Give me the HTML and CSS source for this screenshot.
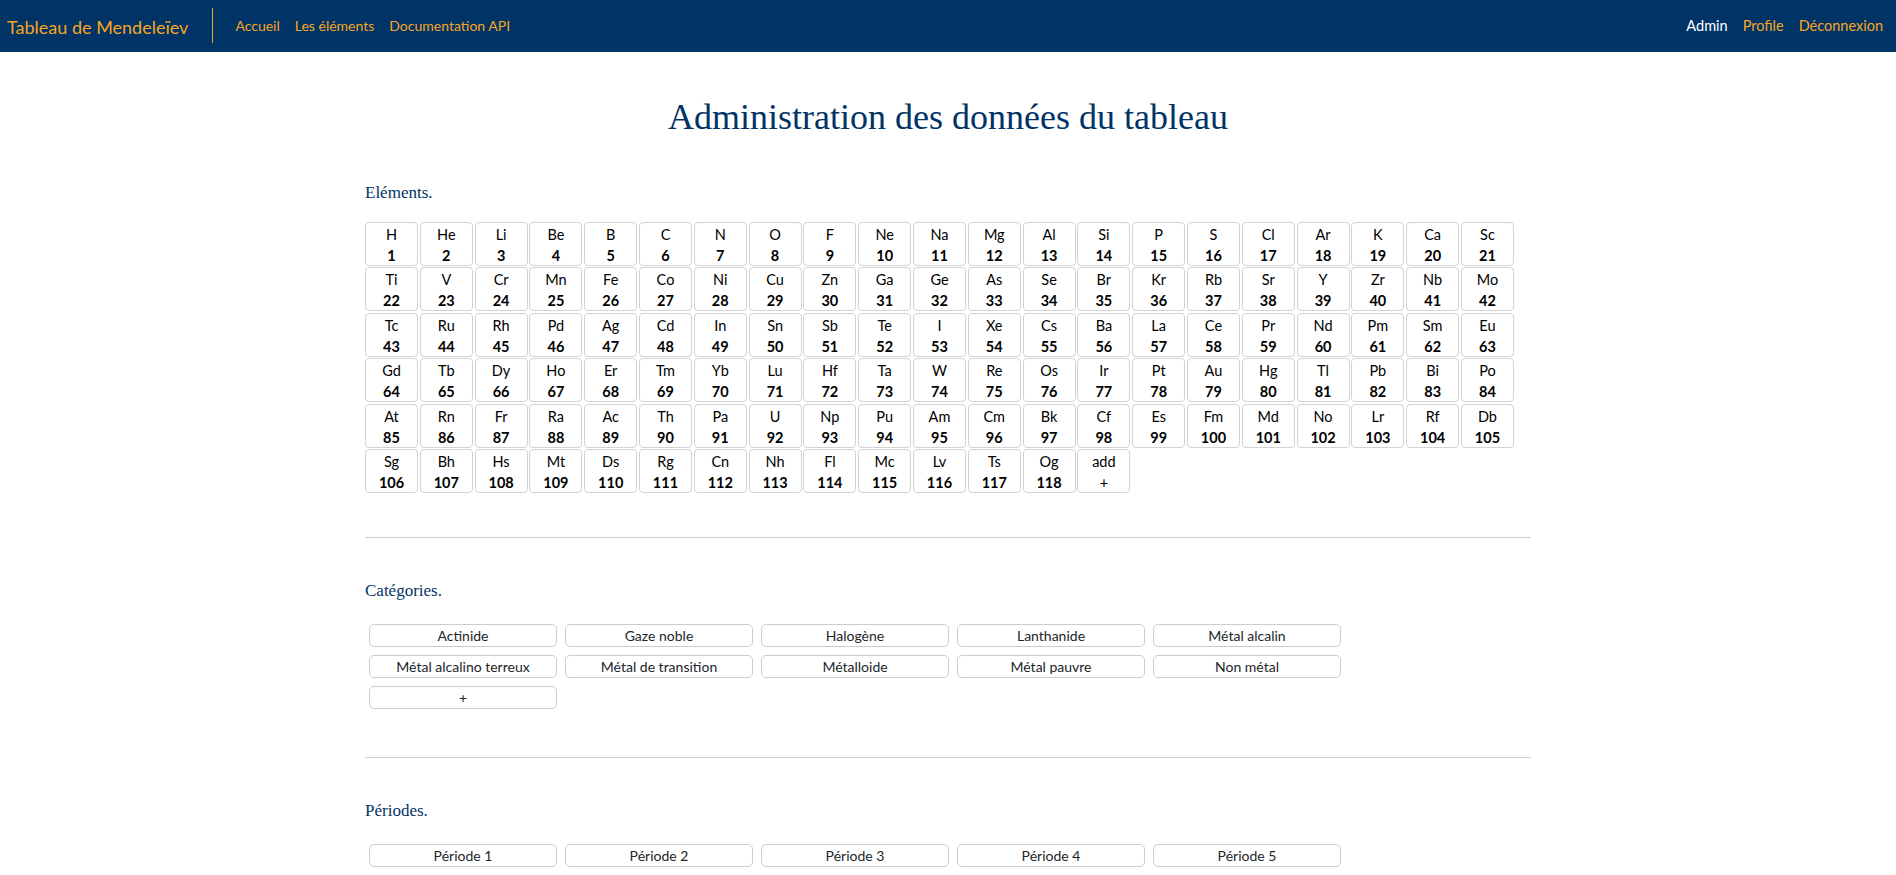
FILE: index.html
```html
<!DOCTYPE html>
<html lang="fr">
<head>
<meta charset="utf-8">
<title>Administration des données du tableau</title>
<link rel="stylesheet" href="styles.css">
</head>
<body>
<nav class="navbar">
  <a class="brand" href="#">Tableau de Mendeleïev</a>
  <span class="sep"></span>
  <ul class="nav-links">
    <li><a href="#">Accueil</a></li>
    <li><a href="#">Les éléments</a></li>
    <li><a href="#">Documentation API</a></li>
  </ul>
  <ul class="nav-links nav-right">
    <li><a class="active" href="#">Admin</a></li>
    <li><a href="#">Profile</a></li>
    <li><a href="#">Déconnexion</a></li>
  </ul>
</nav>

<main class="container">
  <h1 class="title">Administration des données du tableau</h1>

  <h2 class="label">Eléments.</h2>
  <div class="elements">
    <div class="cell"><span>H</span><b>1</b></div>
    <div class="cell"><span>He</span><b>2</b></div>
    <div class="cell"><span>Li</span><b>3</b></div>
    <div class="cell"><span>Be</span><b>4</b></div>
    <div class="cell"><span>B</span><b>5</b></div>
    <div class="cell"><span>C</span><b>6</b></div>
    <div class="cell"><span>N</span><b>7</b></div>
    <div class="cell"><span>O</span><b>8</b></div>
    <div class="cell"><span>F</span><b>9</b></div>
    <div class="cell"><span>Ne</span><b>10</b></div>
    <div class="cell"><span>Na</span><b>11</b></div>
    <div class="cell"><span>Mg</span><b>12</b></div>
    <div class="cell"><span>Al</span><b>13</b></div>
    <div class="cell"><span>Si</span><b>14</b></div>
    <div class="cell"><span>P</span><b>15</b></div>
    <div class="cell"><span>S</span><b>16</b></div>
    <div class="cell"><span>Cl</span><b>17</b></div>
    <div class="cell"><span>Ar</span><b>18</b></div>
    <div class="cell"><span>K</span><b>19</b></div>
    <div class="cell"><span>Ca</span><b>20</b></div>
    <div class="cell"><span>Sc</span><b>21</b></div>
    <div class="cell"><span>Ti</span><b>22</b></div>
    <div class="cell"><span>V</span><b>23</b></div>
    <div class="cell"><span>Cr</span><b>24</b></div>
    <div class="cell"><span>Mn</span><b>25</b></div>
    <div class="cell"><span>Fe</span><b>26</b></div>
    <div class="cell"><span>Co</span><b>27</b></div>
    <div class="cell"><span>Ni</span><b>28</b></div>
    <div class="cell"><span>Cu</span><b>29</b></div>
    <div class="cell"><span>Zn</span><b>30</b></div>
    <div class="cell"><span>Ga</span><b>31</b></div>
    <div class="cell"><span>Ge</span><b>32</b></div>
    <div class="cell"><span>As</span><b>33</b></div>
    <div class="cell"><span>Se</span><b>34</b></div>
    <div class="cell"><span>Br</span><b>35</b></div>
    <div class="cell"><span>Kr</span><b>36</b></div>
    <div class="cell"><span>Rb</span><b>37</b></div>
    <div class="cell"><span>Sr</span><b>38</b></div>
    <div class="cell"><span>Y</span><b>39</b></div>
    <div class="cell"><span>Zr</span><b>40</b></div>
    <div class="cell"><span>Nb</span><b>41</b></div>
    <div class="cell"><span>Mo</span><b>42</b></div>
    <div class="cell"><span>Tc</span><b>43</b></div>
    <div class="cell"><span>Ru</span><b>44</b></div>
    <div class="cell"><span>Rh</span><b>45</b></div>
    <div class="cell"><span>Pd</span><b>46</b></div>
    <div class="cell"><span>Ag</span><b>47</b></div>
    <div class="cell"><span>Cd</span><b>48</b></div>
    <div class="cell"><span>In</span><b>49</b></div>
    <div class="cell"><span>Sn</span><b>50</b></div>
    <div class="cell"><span>Sb</span><b>51</b></div>
    <div class="cell"><span>Te</span><b>52</b></div>
    <div class="cell"><span>I</span><b>53</b></div>
    <div class="cell"><span>Xe</span><b>54</b></div>
    <div class="cell"><span>Cs</span><b>55</b></div>
    <div class="cell"><span>Ba</span><b>56</b></div>
    <div class="cell"><span>La</span><b>57</b></div>
    <div class="cell"><span>Ce</span><b>58</b></div>
    <div class="cell"><span>Pr</span><b>59</b></div>
    <div class="cell"><span>Nd</span><b>60</b></div>
    <div class="cell"><span>Pm</span><b>61</b></div>
    <div class="cell"><span>Sm</span><b>62</b></div>
    <div class="cell"><span>Eu</span><b>63</b></div>
    <div class="cell"><span>Gd</span><b>64</b></div>
    <div class="cell"><span>Tb</span><b>65</b></div>
    <div class="cell"><span>Dy</span><b>66</b></div>
    <div class="cell"><span>Ho</span><b>67</b></div>
    <div class="cell"><span>Er</span><b>68</b></div>
    <div class="cell"><span>Tm</span><b>69</b></div>
    <div class="cell"><span>Yb</span><b>70</b></div>
    <div class="cell"><span>Lu</span><b>71</b></div>
    <div class="cell"><span>Hf</span><b>72</b></div>
    <div class="cell"><span>Ta</span><b>73</b></div>
    <div class="cell"><span>W</span><b>74</b></div>
    <div class="cell"><span>Re</span><b>75</b></div>
    <div class="cell"><span>Os</span><b>76</b></div>
    <div class="cell"><span>Ir</span><b>77</b></div>
    <div class="cell"><span>Pt</span><b>78</b></div>
    <div class="cell"><span>Au</span><b>79</b></div>
    <div class="cell"><span>Hg</span><b>80</b></div>
    <div class="cell"><span>Tl</span><b>81</b></div>
    <div class="cell"><span>Pb</span><b>82</b></div>
    <div class="cell"><span>Bi</span><b>83</b></div>
    <div class="cell"><span>Po</span><b>84</b></div>
    <div class="cell"><span>At</span><b>85</b></div>
    <div class="cell"><span>Rn</span><b>86</b></div>
    <div class="cell"><span>Fr</span><b>87</b></div>
    <div class="cell"><span>Ra</span><b>88</b></div>
    <div class="cell"><span>Ac</span><b>89</b></div>
    <div class="cell"><span>Th</span><b>90</b></div>
    <div class="cell"><span>Pa</span><b>91</b></div>
    <div class="cell"><span>U</span><b>92</b></div>
    <div class="cell"><span>Np</span><b>93</b></div>
    <div class="cell"><span>Pu</span><b>94</b></div>
    <div class="cell"><span>Am</span><b>95</b></div>
    <div class="cell"><span>Cm</span><b>96</b></div>
    <div class="cell"><span>Bk</span><b>97</b></div>
    <div class="cell"><span>Cf</span><b>98</b></div>
    <div class="cell"><span>Es</span><b>99</b></div>
    <div class="cell"><span>Fm</span><b>100</b></div>
    <div class="cell"><span>Md</span><b>101</b></div>
    <div class="cell"><span>No</span><b>102</b></div>
    <div class="cell"><span>Lr</span><b>103</b></div>
    <div class="cell"><span>Rf</span><b>104</b></div>
    <div class="cell"><span>Db</span><b>105</b></div>
    <div class="cell"><span>Sg</span><b>106</b></div>
    <div class="cell"><span>Bh</span><b>107</b></div>
    <div class="cell"><span>Hs</span><b>108</b></div>
    <div class="cell"><span>Mt</span><b>109</b></div>
    <div class="cell"><span>Ds</span><b>110</b></div>
    <div class="cell"><span>Rg</span><b>111</b></div>
    <div class="cell"><span>Cn</span><b>112</b></div>
    <div class="cell"><span>Nh</span><b>113</b></div>
    <div class="cell"><span>Fl</span><b>114</b></div>
    <div class="cell"><span>Mc</span><b>115</b></div>
    <div class="cell"><span>Lv</span><b>116</b></div>
    <div class="cell"><span>Ts</span><b>117</b></div>
    <div class="cell"><span>Og</span><b>118</b></div>
    <div class="cell"><span>add</span><span>+</span></div>
  </div>

  <hr class="divider">

  <h2 class="label">Catégories.</h2>
  <div class="btn-list">
    <button class="btn">Actinide</button>
    <button class="btn">Gaze noble</button>
    <button class="btn">Halogène</button>
    <button class="btn">Lanthanide</button>
    <button class="btn">Métal alcalin</button>
    <button class="btn">Métal alcalino terreux</button>
    <button class="btn">Métal de transition</button>
    <button class="btn">Métalloide</button>
    <button class="btn">Métal pauvre</button>
    <button class="btn">Non métal</button>
    <button class="btn">+</button>
  </div>

  <hr class="divider">

  <h2 class="label">Périodes.</h2>
  <div class="btn-list">
    <button class="btn">Période 1</button>
    <button class="btn">Période 2</button>
    <button class="btn">Période 3</button>
    <button class="btn">Période 4</button>
    <button class="btn">Période 5</button>
    <button class="btn">Période 6</button>
    <button class="btn">Période 7</button>
    <button class="btn">+</button>
  </div>
</main>
</body>
</html>
```

FILE: styles.css
```css
* { box-sizing: border-box; }

html, body {
  margin: 0;
  padding: 0;
  background: #ffffff;
}

body {
  font-family: Lato, "Noto Sans", sans-serif;
  font-size: 14px;
  color: #212529;
}

/* Navbar */
.navbar {
  height: 52px;
  background: #003366;
  display: flex;
  align-items: center;
  padding: 0 13px 0 7px;
}

.navbar a {
  text-decoration: none;
  color: #f6a623;
}

.brand {
  font-size: 18px;
  line-height: 24px;
  padding-top: 2px;
}

.sep {
  width: 1px;
  height: 35px;
  background: #f6a623;
  margin: 8px 0 0 24px;
  align-self: flex-start;
}

.nav-links {
  list-style: none;
  display: flex;
  gap: 15px;
  margin: 0 0 0 22px;
  padding: 0;
  font-size: 14px;
  line-height: 20px;
}

.nav-right {
  margin-left: auto;
  font-size: 14.5px;
}

.navbar a.active {
  color: #ffffff;
}

/* Main */
.container {
  width: 1166px;
  margin: 0 auto;
}

.title {
  font-family: "Liberation Serif", "Times New Roman", serif;
  font-weight: normal;
  font-size: 36px;
  line-height: 44px;
  color: #003366;
  text-align: center;
  margin: 43px 0 44px;
}

.label {
  font-family: "Liberation Serif", "Times New Roman", serif;
  font-weight: normal;
  font-size: 17px;
  line-height: 20px;
  color: #003366;
  margin: 0 0 19px;
}

.elements {
  display: grid;
  grid-template-columns: repeat(21, 53px);
  column-gap: 1.8px;
  row-gap: 1.4px;
}

.cell {
  height: 44px;
  border: 1px solid #d3d3d3;
  border-radius: 4px;
  background: #fff;
  padding-top: 1px;
  display: flex;
  flex-direction: column;
  align-items: center;
  color: #000;
  font-size: 14.5px;
  line-height: 21px;
}

.cell b {
  font-weight: 700;
}

.divider {
  border: 0;
  border-top: 1px solid #cfcfcf;
  margin: 44px 0 43px;
  height: 0;
}

.btn-list {
  display: flex;
  flex-wrap: wrap;
}

.btn {
  width: 188px;
  height: 23px;
  margin: 4px;
  padding: 0;
  border: 1px solid #cccccc;
  border-radius: 5px;
  background: #fff;
  font-family: inherit;
  font-size: 14px;
  line-height: 21px;
  color: #212529;
  text-align: center;
}
```
